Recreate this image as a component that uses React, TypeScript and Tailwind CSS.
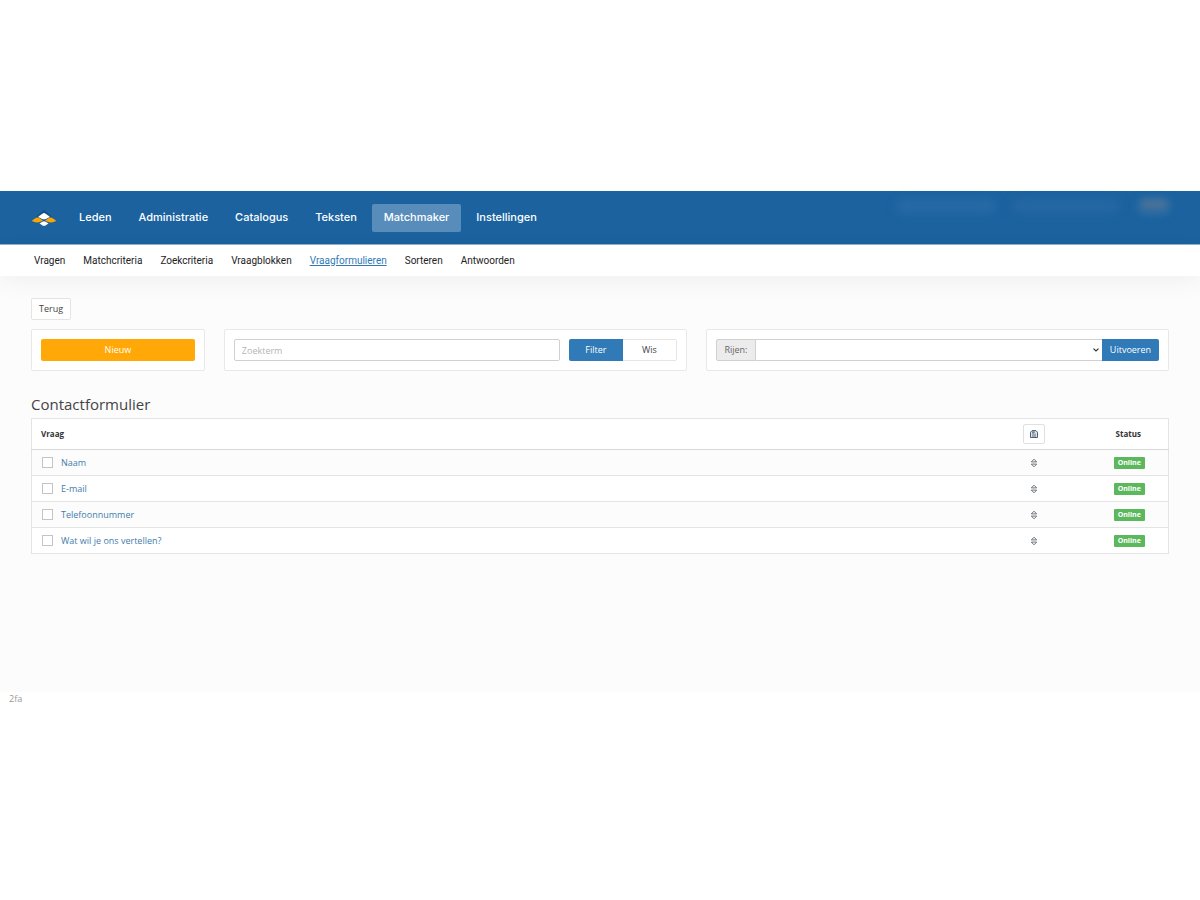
import React from 'react';

const mainNav = ['Leden', 'Administratie', 'Catalogus', 'Teksten', 'Matchmaker', 'Instellingen'];
const subNav = ['Vragen', 'Matchcriteria', 'Zoekcriteria', 'Vraagblokken', 'Vraagformulieren', 'Sorteren', 'Antwoorden'];
const questions = ['Naam', 'E-mail', 'Telefoonnummer', 'Wat wil je ons vertellen?'];

function Logo() {
  return (
    <svg viewBox="0 0 26 18" className="h-[18px] w-[26px]" aria-label="Logo">
      <path d="M13 1 21 7.500 13 12 5 7.500Z" fill="#164f86" />
      <path d="M13 4 Q14 4 19 8 Q14 10.500 13 10.500 Q12 10.500 7 8 Q12 4 13 4Z" fill="#fff" />
      <path d="M6.500 8.500 Q8 8.500 12 11.700 Q8 13.500 6.500 13.500 Q5 13.500 0.700 12 Q4.500 8.500 6.500 8.500Z" fill="#ffa500" />
      <path d="M19.500 8.500 Q18 8.500 14 11.700 Q18 13.500 19.500 13.500 Q21 13.500 25.300 12 Q21.500 8.500 19.500 8.500Z" fill="#ffa500" />
      <path d="M13 12.300 Q14 12.300 17.500 14.500 Q14 17 13 17 Q12 17 8.500 14.500 Q12 12.300 13 12.300Z" fill="#fff" />
    </svg>
  );
}

function SaveIcon() {
  return (
    <svg viewBox="0 0 8 8" className="h-2 w-2" fill="none" stroke="#4c5f75">
      <path d="M0.500 2.200 2 0.600H6L7.500 2.200V7.500H0.500Z" fill="#dfe5ec" />
      <path d="M2 2H5" strokeWidth="1" />
      <path d="M3 2V7.500M5 3.500V7.500" strokeWidth="0.900" />
    </svg>
  );
}

function SortIcon() {
  return (
    <svg viewBox="0 0 8 10" className="h-[10px] w-2" fill="none" stroke="#6b727b" strokeLinejoin="round">
      <path d="M1.300 3.900 4 1.200 6.700 3.900ZM1.300 6.100 4 8.800 6.700 6.100Z" />
    </svg>
  );
}

export default function App() {
  return (
    <div className="min-h-screen bg-white pt-[191px] font-['Open_Sans',sans-serif] text-[9px] leading-3 text-[#444]">
      <header className="flex h-[54px] items-center border-b border-[#8db3d4] bg-[#1b629f] pl-[31px] font-['Inter',sans-serif]">
        <Logo />
        <nav className="ml-[10px] flex items-center gap-[3px]">
          {mainNav.map((item) => (
            <a
              key={item}
              href="#"
              className={
                item === 'Matchmaker'
                  ? 'rounded-[2px] bg-[#588dbb] px-3 pt-[5px] pb-[7px] text-[11px] leading-4 font-medium text-white'
                  : 'rounded-[2px] px-3 pt-[5px] pb-[7px] text-[11px] leading-4 font-medium text-white'
              }
            >
              {item}
            </a>
          ))}
        </nav>
        <div className="mr-7 mb-6 ml-auto flex items-center gap-4" aria-hidden="true">
          <span className="h-4 w-[100px] rounded-full bg-[#266aa5] blur-[4px]" />
          <span className="h-4 w-[108px] rounded-full bg-[#2467a3] blur-[4px]" />
          <span className="flex h-5 w-9 justify-center rounded-full bg-[#2d6ba1] pt-1 blur-[3px]">
            <span className="h-2 w-6 rounded-full bg-[#4d7298]" />
          </span>
        </div>
      </header>
      <nav className="relative flex h-[31px] items-center gap-[18px] bg-white pl-[34px] font-['Roboto',sans-serif] text-[10px] text-[#222] shadow-[0_6px_24px_rgba(0,0,0,0.05)]">
        {subNav.map((item) => (
          <a key={item} href="#" className={item === 'Vraagformulieren' ? 'text-[#2f7ab5] underline' : ''}>
            {item}
          </a>
        ))}
      </nav>
      <main className="min-h-[416px] bg-[#fcfcfc] px-[31px] pt-[22px]">
        <button className="h-[22px] rounded-[2px] border border-[#e4e4e4] bg-white px-[7px]">Terug</button>
        <div className="mt-[9px] grid grid-cols-12 gap-[19px]">
          <div className="col-span-2 flex rounded-[2px] border border-[#e8e8e8] bg-white p-[9px]">
            <button className="h-[22px] w-full rounded-[2px] bg-[#ffa807] text-white">Nieuw</button>
          </div>
          <form className="col-span-5 flex rounded-[2px] border border-[#e8e8e8] bg-white p-[9px]">
            <input
              aria-label="Zoekterm"
              placeholder="Zoekterm"
              className="h-[22px] min-w-0 flex-1 rounded-[2px] border border-[#d0d0d0] px-[7px] placeholder:text-[#b5b5b5]"
            />
            <button type="button" className="ml-[9px] h-[22px] w-[54px] rounded-l-[2px] bg-[#2f7ab7] text-white">
              Filter
            </button>
            <button type="button" className="h-[22px] w-[54px] rounded-r-[2px] border border-l-0 border-[#e6e6e6] bg-white">
              Wis
            </button>
          </form>
          <form className="col-span-5 flex rounded-[2px] border border-[#e8e8e8] bg-white p-[9px]">
            <label
              htmlFor="rows"
              className="flex h-[22px] w-10 items-center justify-center rounded-l-[2px] border border-[#d0d0d0] bg-[#ececec] text-[#666]"
            >
              Rijen:
            </label>
            <div className="relative min-w-0 flex-1">
              <select id="rows" className="h-[22px] w-full appearance-none border-y border-[#d0d0d0] bg-white" />
              <svg viewBox="0 0 6 4" className="pointer-events-none absolute top-[9px] right-[3px] h-1 w-[6px]" fill="none" stroke="#333" strokeWidth="1.200">
                <path d="M0.500 0.600 3 3 5.500 0.600" />
              </svg>
            </div>
            <button type="button" className="h-[22px] w-[57px] rounded-r-[2px] bg-[#2f7ab7] text-white">
              Uitvoeren
            </button>
          </form>
        </div>
        <h1 className="mt-[23px] text-[15px] leading-5 text-[#444]">Contactformulier</h1>
        <table className="mt-1 w-full border border-[#e4e4e4] bg-white">
          <thead>
            <tr className="h-[31px] border-b border-[#d8d8d8]">
              <th className="pl-[9px] text-left text-[8px] font-bold text-[#333]">Vraag</th>
              <th className="w-[110px]">
                <button aria-label="Opslaan" className="inline-flex h-5 w-[22px] items-center justify-center rounded-[2px] border border-[#e0e0e0] bg-white align-middle">
                  <SaveIcon />
                </button>
              </th>
              <th className="w-[80px] text-center text-[8px] font-bold text-[#333]">Status</th>
            </tr>
          </thead>
          <tbody>
            {questions.map((question, index) => (
              <tr key={question} className="h-[26px] border-b border-[#e4e4e4] odd:bg-[#fcfcfc]">
                <td className="pl-[10px]">
                  <div className="flex items-center gap-2">
                    <input
                      id={`question-${index}`}
                      type="checkbox"
                      aria-label={question}
                      className="size-[11px] appearance-none border border-[#c4c4c4] bg-white"
                    />
                    <a href="#" className="text-[#3f7cac]">{question}</a>
                  </div>
                </td>
                <td>
                  <div className="flex justify-center">
                    <SortIcon />
                  </div>
                </td>
                <td className="pl-[2px] text-center">
                  <span className="mt-px inline-block rounded-[1px] bg-[#5cb85c] px-1 text-[7px] leading-3 font-bold text-white">Online</span>
                </td>
              </tr>
            ))}
          </tbody>
        </table>
      </main>
      <footer className="px-[9px] pt-px text-[#999]">2fa</footer>
    </div>
  );
}
